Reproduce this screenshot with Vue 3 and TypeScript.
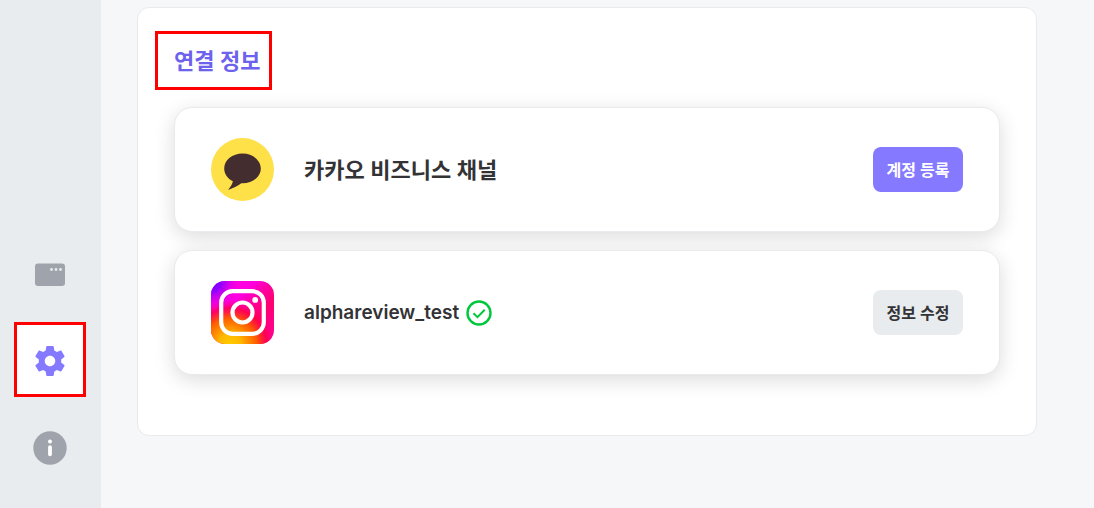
<script setup lang="ts">
interface Account {
  id: 'kakao' | 'instagram'
  name: string
  verified: boolean
  action: string
  primary: boolean
}

const accounts: Account[] = [
  { id: 'kakao', name: '카카오 비즈니스 채널', verified: false, action: '계정 등록', primary: true },
  { id: 'instagram', name: 'alphareview_test', verified: true, action: '정보 수정', primary: false },
]
</script>

<template>
  <div class="layout">
    <nav class="sidebar" aria-label="메뉴">
      <button type="button" class="nav-button" aria-label="화면">
        <svg width="34" height="26" viewBox="0 0 34 26">
          <rect x="2" y="1.5" width="30" height="22.5" rx="3" fill="#9fa3ac" />
          <g fill="#e8ecef">
            <circle cx="18.5" cy="7.5" r="1.4" />
            <circle cx="23" cy="7.5" r="1.4" />
            <circle cx="27.5" cy="7.5" r="1.4" />
          </g>
        </svg>
      </button>
      <button type="button" class="nav-button active" aria-label="설정" aria-current="page">
        <svg width="36" height="36" viewBox="0 0 24 24" fill="#857aff">
          <path d="M19.43 12.98c.04-.32.07-.64.07-.98s-.03-.66-.07-.98l2.11-1.65c.19-.15.24-.42.12-.64l-2-3.46c-.12-.22-.39-.3-.61-.22l-2.49 1c-.52-.4-1.08-.73-1.69-.98l-.38-2.65C14.46 2.18 14.25 2 14 2h-4c-.25 0-.46.18-.49.42l-.38 2.65c-.61.25-1.17.59-1.69.98l-2.49-1c-.23-.09-.49 0-.61.22l-2 3.46c-.13.22-.07.49.12.64l2.11 1.65c-.04.32-.07.65-.07.98s.03.66.07.98l-2.11 1.65c-.19.15-.24.42-.12.64l2 3.46c.12.22.39.3.61.22l2.49-1c.52.4 1.08.73 1.69.98l.38 2.65c.03.24.24.42.49.42h4c.25 0 .46-.18.49-.42l.38-2.65c.61-.25 1.17-.59 1.69-.98l2.49 1c.23.09.49 0 .61-.22l2-3.46c.12-.22.07-.49-.12-.64l-2.11-1.65zM12 15.5c-1.93 0-3.5-1.57-3.5-3.5s1.57-3.5 3.5-3.5 3.5 1.57 3.5 3.5-1.57 3.5-3.5 3.5z" />
        </svg>
      </button>
      <button type="button" class="nav-button" aria-label="정보">
        <svg width="34" height="34" viewBox="0 0 34 34">
          <circle cx="17" cy="17" r="16.7" fill="#9fa3ac" />
          <circle cx="17" cy="10.6" r="2" fill="#fff" />
          <rect x="15.1" y="14.2" width="3.8" height="11" rx="1.9" fill="#fff" />
        </svg>
      </button>
    </nav>

    <main class="content">
      <section class="panel" aria-labelledby="connection-title">
        <h1 id="connection-title" class="title">연결 정보</h1>
        <ul class="accounts">
          <li v-for="account in accounts" :key="account.id" class="account">
            <svg v-if="account.id === 'kakao'" class="logo" viewBox="0 0 63 63" aria-hidden="true">
              <circle cx="31.5" cy="31.5" r="31.5" fill="#fee049" />
              <path d="M31.5 15.6c-10.1 0-18.3 6.6-18.3 14.900 0 5.400 3.400 10.100 8.700 12.700-.6 2.800-2.600 6-4.800 8.700 4.900-1.400 9.500-3.800 13.200-6.600h1.200c10.100 0 18.300-6.600 18.300-14.800s-8.200-14.900-18.300-14.900z" fill="#432d2e" />
            </svg>
            <svg v-else class="logo" viewBox="0 0 63 63" aria-hidden="true">
              <defs>
                <linearGradient id="ig-base" x1="0" y1="0" x2="1" y2="1">
                  <stop offset="0.35" stop-color="#ff00e0" />
                  <stop offset="0.5" stop-color="#ff00a0" />
                  <stop offset="0.65" stop-color="#ff0070" />
                  <stop offset="1" stop-color="#ff00a0" />
                </linearGradient>
                <radialGradient id="ig-warm" cx="0.3" cy="1.02" r="0.72">
                  <stop offset="0" stop-color="#ffcc00" />
                  <stop offset="0.25" stop-color="#ffb800" />
                  <stop offset="0.6" stop-color="#ff5a00" />
                  <stop offset="0.82" stop-color="#ff0040" stop-opacity="0.75" />
                  <stop offset="1" stop-color="#ff0070" stop-opacity="0" />
                </radialGradient>
                <radialGradient id="ig-violet" cx="0" cy="0" r="0.48">
                  <stop offset="0" stop-color="#5a00ff" />
                  <stop offset="0.35" stop-color="#9000ff" />
                  <stop offset="1" stop-color="#ff00d8" stop-opacity="0" />
                </radialGradient>
              </defs>
              <rect width="63" height="63" rx="14" fill="url(#ig-base)" />
              <rect width="63" height="63" rx="14" fill="url(#ig-warm)" />
              <rect width="63" height="63" rx="14" fill="url(#ig-violet)" />
              <g fill="none" stroke="#fff" stroke-width="4.2">
                <rect x="10.2" y="10.2" width="42.6" height="42.6" rx="11.5" />
                <circle cx="31.5" cy="31.5" r="10" />
              </g>
              <circle cx="44.2" cy="18.9" r="2.9" fill="#fff" />
            </svg>
            <span class="name" :class="account.id">{{ account.name }}</span>
            <svg v-if="account.verified" class="check" viewBox="0 0 26 26" role="img" aria-label="연결됨">
              <circle cx="13" cy="13" r="11.5" fill="none" stroke="#00c73c" stroke-width="2.4" />
              <path d="M7.5 13.2l4 4 7.2-7.4" fill="none" stroke="#00c73c" stroke-width="2" />
            </svg>
            <button type="button" class="action" :class="{ primary: account.primary }">{{ account.action }}</button>
          </li>
        </ul>
      </section>
    </main>
  </div>
</template>

<style>
body {
  margin: 0;
  background: #f6f7f9;
}
</style>

<style scoped>
.layout {
  display: flex;
  box-sizing: border-box;
  min-height: 100vh;
  font-family: Inter, "Noto Sans CJK KR", sans-serif;
  color: #333336;
}

.sidebar {
  display: flex;
  flex: none;
  flex-direction: column;
  align-items: center;
  justify-content: flex-end;
  gap: 34px;
  box-sizing: border-box;
  width: 101px;
  padding: 0 1px 43px 0;
  background: #e8ecef;
}

.nav-button {
  display: flex;
  align-items: center;
  justify-content: center;
  padding: 0;
  border: 0;
  background: none;
  cursor: pointer;
}

.nav-button.active {
  box-sizing: border-box;
  width: 72px;
  height: 75px;
  padding-top: 2px;
  border: 3px solid #ff0000;
  background: #ffffff;
}

.content {
  flex: 1;
  padding: 7px 57px 0 36px;
}

.panel {
  padding: 23px 17px 60px;
  border: 1px solid #e8eaed;
  border-radius: 12px;
  background: #ffffff;
}

.title {
  width: fit-content;
  margin: 0;
  padding: 10px 8px 8px 16px;
  border: 3px solid #ff0000;
  color: #6d62ee;
  font-size: 22px;
  font-weight: 600;
  line-height: 35px;
}

.accounts {
  display: grid;
  gap: 18px;
  margin: 17px 19px 0;
  padding: 0;
  list-style: none;
}

.account {
  display: flex;
  align-items: center;
  box-sizing: border-box;
  padding: 30px 36px;
  border: 1px solid #e8eaed;
  border-radius: 18px;
  background: #ffffff;
  box-shadow: 0 5px 20px rgba(0, 0, 0, 0.14);
}

.logo {
  flex: none;
  width: 63px;
  height: 63px;
}

.name {
  margin-left: 30px;
  font-size: 22px;
  font-weight: 600;
  line-height: 30px;
}

.name.instagram {
  font-size: 19px;
}

.check {
  flex: none;
  width: 26px;
  height: 26px;
  margin-left: 7px;
}

.action {
  width: 90px;
  height: 45px;
  margin-left: auto;
  padding: 0 0 2px;
  border: 0;
  border-radius: 8px;
  background: #e8ecef;
  color: #333336;
  font: inherit;
  font-size: 16px;
  font-weight: 600;
  cursor: pointer;
}

.action.primary {
  background: #857aff;
  color: #ffffff;
}
</style>
